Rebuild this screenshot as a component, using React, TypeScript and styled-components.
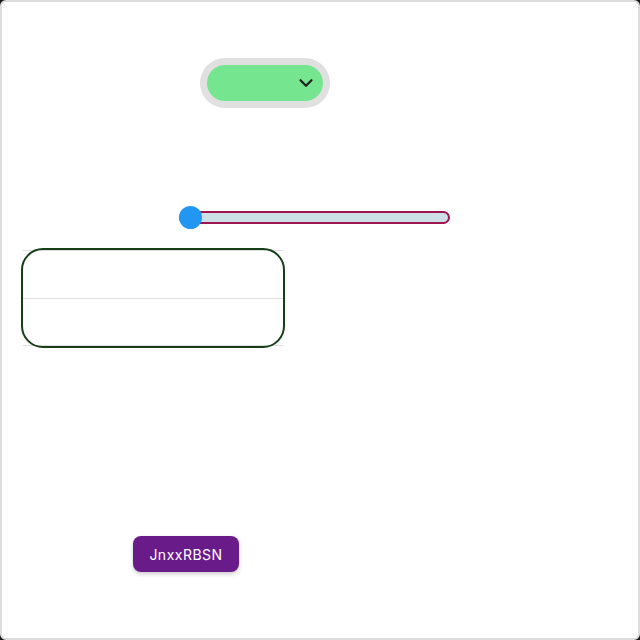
import React from "react";
import styled, { createGlobalStyle } from "styled-components";
import { ChevronDown } from "lucide-react";

const Global = createGlobalStyle`
  html, body { margin: 0; padding: 0; background: #1a1a1a; }
  * { box-sizing: border-box; }
`;

const Frame = styled.div`
  width: 640px;
  height: 640px;
  background: #ffffff;
  border: 2px solid #dcdcdc;
  border-radius: 6px;
  display: flex;
  flex-direction: column;
  align-items: flex-start;
  padding-top: 56px;
  font-family: "Inter", "Liberation Sans", sans-serif;
`;

const SelectRing = styled.div`
  margin-left: 198px;
  padding: 7px;
  border-radius: 25px;
  background: #e0e0e0;
`;

const SelectPill = styled.button`
  width: 116px;
  height: 36px;
  border: none;
  border-radius: 18px;
  background: #75e590;
  display: flex;
  align-items: center;
  justify-content: flex-end;
  padding: 0 6px 0 0;
  color: #1f1f1f;
`;

const SliderWrap = styled.div`
  margin-left: 177px;
  margin-top: 98px;
  width: 271px;
  height: 23px;
  position: relative;
  display: flex;
  align-items: center;
`;

const Track = styled.div`
  width: 100%;
  height: 13px;
  border: 2px solid #9e1550;
  border-radius: 7px;
  background: #cde0e8;
`;

const Thumb = styled.div`
  position: absolute;
  left: 0;
  top: 0;
  width: 23px;
  height: 23px;
  border-radius: 50%;
  background: #2196f3;
`;

const List = styled.div`
  margin-left: 21px;
  margin-top: 21px;
  width: 260px;
  outline: 2px solid #163e17;
  border-radius: 20px;
`;

const Row = styled.div`
  height: 48px;
  border-top: 1px solid #dedede;
  &:last-child { border-bottom: 1px solid #dedede; }
`;

const Action = styled.button`
  margin-left: 131px;
  margin-top: 190px;
  width: 106px;
  height: 36px;
  border: none;
  border-radius: 8px;
  background: #6a1b8a;
  color: #ffffff;
  font-family: "Inter", "Liberation Sans", sans-serif;
  font-size: 14px;
  letter-spacing: 0.5px;
  box-shadow: 0 2px 4px rgba(0, 0, 0, 0.2);
`;

export default function App() {
  return (
    <>
      <Global />
      <Frame>
        <SelectRing>
          <SelectPill aria-label="select">
            <ChevronDown size={22} strokeWidth={2.4} />
          </SelectPill>
        </SelectRing>
        <SliderWrap>
          <Track />
          <Thumb />
        </SliderWrap>
        <List>
          <Row />
          <Row />
        </List>
        <Action>JnxxRBSN</Action>
      </Frame>
    </>
  );
}
